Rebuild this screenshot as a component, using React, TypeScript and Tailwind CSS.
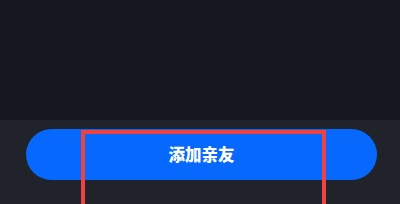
export default function App() {
  return (
    <div className="relative w-[400px] h-[204px] overflow-hidden flex flex-col" style={{ fontFamily: '"Noto Sans CJK SC", "Noto Sans", sans-serif' }}>
      <div className="h-[120px] bg-[#17181f]" />
      <div className="flex-1 bg-[#21232a] pt-[9px] pl-[26px] pr-[23px]">
        <button className="w-full h-[51px] rounded-full bg-[#0668fc] text-white text-[16.5px] font-black flex items-center justify-center">
          添加亲友
        </button>
      </div>
      <div className="absolute left-[81px] top-[130px] w-[245px] h-[90px] border-4 border-b-0 border-[#ef4242]" />
    </div>
  );
}
